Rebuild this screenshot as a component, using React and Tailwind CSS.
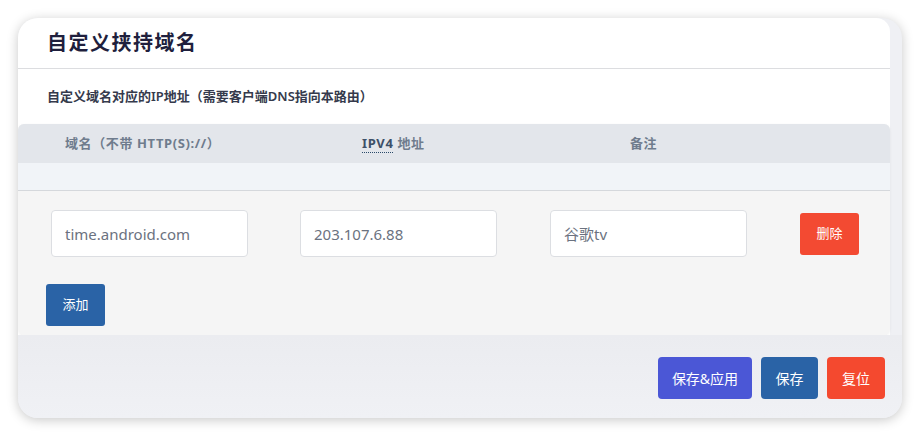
import { useState } from 'react';

const font = { fontFamily: '"Noto Sans", "Noto Sans CJK SC", sans-serif' };

export default function App() {
  const [rows, setRows] = useState([
    { domain: 'time.android.com', ip: '203.107.6.88', note: '谷歌tv' },
  ]);

  return (
    <div className="w-[920px] h-[437px] bg-white pt-[18px] px-[18px]" style={font}>
      <div className="w-[884px] h-[400px] rounded-[20px] bg-[#eff0f4] shadow-[0_2px_12px_rgba(0,0,0,0.22)] overflow-hidden flex flex-col">
        <div className="w-[872px] bg-white rounded-tr-[14px]">
          <div className="h-[51px] flex items-center pl-[29px] border-b border-[#dcdde0]">
            <h2 className="text-[20px] font-bold tracking-[1.5px] text-[#1f1f3d]">自定义挟持域名</h2>
          </div>
          <div className="h-[55px] flex items-center pl-[29px]">
            <p className="text-[13px] font-semibold text-[#353a4c]">自定义域名对应的IP地址（需要客户端DNS指向本路由）</p>
          </div>

          <div className="rounded-[6px] overflow-hidden bg-[#f5f5f5] shadow-[0_1px_3px_rgba(0,0,0,0.06)]">
            <div className="h-[39px] bg-[#e3e6eb] flex items-center pl-[47px] text-[13px] font-bold tracking-[0.6px] text-[#6f7c8d]">
              <div className="w-[297px]">域名（不带 HTTP(S)://）</div>
              <div className="w-[268px]">
                <span className="border-b border-dotted border-[#2a4a6a] text-[#3d5068]">IPV4</span> 地址
              </div>
              <div>备注</div>
            </div>
            <div className="h-[28px] bg-[#f1f4f8] border-b border-[#d5d8dc]"></div>

            <div className="pt-[19px] pb-[9px]">
              {rows.map((r, i) => (
                <div key={i} className="flex items-center pl-[33px]">
                  <input
                    value={r.domain}
                    readOnly
                    className="w-[197px] h-[47px] mr-[52px] bg-white border border-[#dcdee2] rounded-[4px] px-[13px] text-[15px] text-[#6b7280] outline-none"
                  />
                  <input
                    value={r.ip}
                    readOnly
                    className="w-[197px] h-[47px] mr-[53px] bg-white border border-[#dcdee2] rounded-[4px] px-[13px] text-[15px] text-[#6b7280] outline-none"
                  />
                  <input
                    value={r.note}
                    readOnly
                    className="w-[197px] h-[47px] mr-[53px] bg-white border border-[#dcdee2] rounded-[4px] px-[13px] text-[15px] text-[#6b7280] outline-none"
                  />
                  <button
                    onClick={() => setRows(rows.filter((_, j) => j !== i))}
                    className="w-[59px] h-[42px] bg-[#f34a32] rounded-[3px] text-white text-[13px]"
                  >
                    删除
                  </button>
                </div>
              ))}
              <div className="pl-[28px] mt-[27px]">
                <button
                  onClick={() => setRows([...rows, { domain: '', ip: '', note: '' }])}
                  className="w-[59px] h-[42px] bg-[#2a63a6] rounded-[3px] text-white text-[13px]"
                >
                  添加
                </button>
              </div>
            </div>
          </div>
        </div>

        <div className="flex justify-end gap-[9px] pr-[17px] pt-[22px] bg-gradient-to-b from-[#ebecf0] to-[#f0f1f5] flex-1">
          <button className="w-[94px] h-[42px] bg-[#4b57d6] rounded-[4px] text-white text-[14px]">保存&amp;应用</button>
          <button className="w-[57px] h-[42px] bg-[#2a63a6] rounded-[4px] text-white text-[14px]">保存</button>
          <button className="w-[58px] h-[42px] bg-[#f4492f] rounded-[4px] text-white text-[14px]">复位</button>
        </div>
      </div>
    </div>
  );
}
